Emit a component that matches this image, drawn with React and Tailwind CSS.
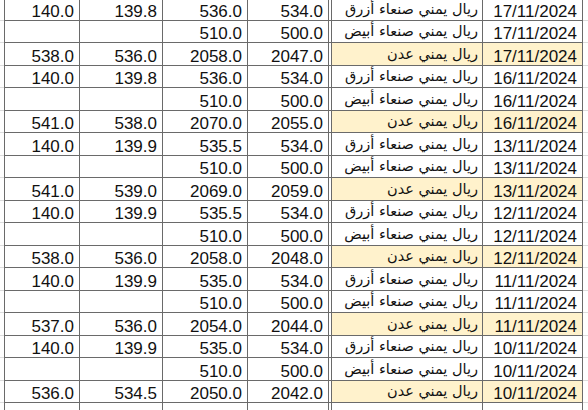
import React from 'react'

const BLUE = 'ريال يمني صنعاء أزرق'
const WHITE = 'ريال يمني صنعاء أبيض'
const ADEN = 'ريال يمني عدن'

// each day: blue row, white row (no wholesale prices), Aden row
const days = [
  { date: '17/11/2024', blue: ['140.0', '139.8', '536.0', '534.0'], aden: ['538.0', '536.0', '2058.0', '2047.0'] },
  { date: '16/11/2024', blue: ['140.0', '139.8', '536.0', '534.0'], aden: ['541.0', '538.0', '2070.0', '2055.0'] },
  { date: '13/11/2024', blue: ['140.0', '139.9', '535.5', '534.0'], aden: ['541.0', '539.0', '2069.0', '2059.0'] },
  { date: '12/11/2024', blue: ['140.0', '139.9', '535.5', '534.0'], aden: ['538.0', '536.0', '2058.0', '2048.0'] },
  { date: '11/11/2024', blue: ['140.0', '139.9', '535.0', '534.0'], aden: ['537.0', '536.0', '2054.0', '2044.0'] },
  { date: '10/11/2024', blue: ['140.0', '139.9', '535.0', '534.0'], aden: ['536.0', '534.5', '2050.0', '2042.0'] },
]

const rows = days.flatMap((d) => [
  { vals: d.blue, label: BLUE, date: d.date, hl: false },
  { vals: ['', '', '510.0', '500.0'], label: WHITE, date: d.date, hl: false },
  { vals: d.aden, label: ADEN, date: d.date, hl: true },
])

// partial row cut off by the bottom edge
rows.push({ vals: ['', '', '', ''], label: '', date: '', hl: false })

function Row({ vals, label, date, hl }) {
  const num = 'flex items-end justify-end pr-[5px] border-r border-[#6a6a6a] h-full'
  return (
    <div className="flex h-[22.5px] shrink-0">
      <div className="w-[4px] border-b border-[#dcdcdc]" />
      <div className="flex border-l border-b border-[#6a6a6a] h-full">
        <div className={`${num} w-[75px]`}>{vals[0]}</div>
        <div className={`${num} w-[83px]`}>{vals[1]}</div>
        <div className={`${num} w-[85px]`}>{vals[2]}</div>
        <div className="flex items-end justify-end pr-[5px] border-r-4 border-double border-[#6a6a6a] h-full w-[84px]">
          {vals[3]}
        </div>
        <div
          dir="rtl"
          className={`flex items-end pr-[4px] pb-[2px] border-r border-[#6a6a6a] h-full w-[151px] text-[14.5px] font-['DejaVu_Sans',sans-serif] ${hl ? 'bg-[#fff2cc]' : ''}`}
        >
          {label}
        </div>
        <div
          className={`flex items-end justify-end pr-[5px] border-r border-[#6a6a6a] h-full w-[100px] ${hl ? 'bg-[#fff2cc]' : ''}`}
        >
          {date}
        </div>
      </div>
      <div className="flex-1 border-b border-[#dcdcdc]" />
    </div>
  )
}

export default function App() {
  return (
    <div className="w-[588px] h-[410px] overflow-hidden bg-white text-[#111] font-['Liberation_Sans',Arial,sans-serif] text-[17px] leading-[17px]">
      <div className="flex flex-col -mt-[2px]">
        {rows.map((r, i) => (
          <Row key={i} {...r} />
        ))}
      </div>
    </div>
  )
}
